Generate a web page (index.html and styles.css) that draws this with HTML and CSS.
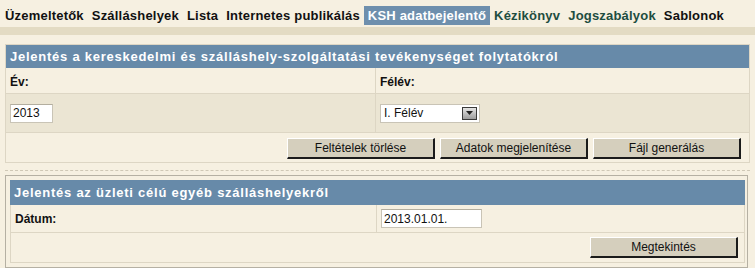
FILE: index.html
```html
<!DOCTYPE html>
<html lang="hu">
<head>
<meta charset="utf-8">
<title>KSH adatbejelentő</title>
<link rel="stylesheet" href="styles.css">
</head>
<body>
<nav class="topnav">
  <a class="nav-item" href="#">Üzemeltetők</a>
  <a class="nav-item" href="#">Szálláshelyek</a>
  <a class="nav-item" href="#">Lista</a>
  <a class="nav-item" href="#">Internetes publikálás</a>
  <a class="nav-item active" href="#">KSH adatbejelentő</a>
  <a class="nav-item visited" href="#">Kézikönyv</a>
  <a class="nav-item visited" href="#">Jogszabályok</a>
  <a class="nav-item" href="#">Sablonok</a>
</nav>
<div class="band"></div>
<main class="content">
  <section class="panel">
    <h2 class="panel-title">Jelentés a kereskedelmi és szálláshely-szolgáltatási tevékenységet folytatókról</h2>
    <div class="row row-label">
      <div class="cell cell-left">Év:</div>
      <div class="cell">Félév:</div>
    </div>
    <div class="row row-input">
      <div class="cell cell-left"><input class="field field-year" type="text" value="2013"></div>
      <div class="cell">
        <span class="select-wrap">
          <select class="select"><option>I. Félév</option><option>II. Félév</option></select>
          <span class="select-arrow"><svg width="7" height="4" viewBox="0 0 7 4"><path d="M0 0h7L3.5 4z" fill="#222"/></svg></span>
        </span>
      </div>
    </div>
    <div class="row row-actions">
      <button class="btn" type="button">Feltételek törlése</button>
      <button class="btn" type="button">Adatok megjelenítése</button>
      <button class="btn" type="button">Fájl generálás</button>
    </div>
  </section>
  <div class="divider"></div>
  <section class="panel-outer">
    <div class="panel-inner">
      <h2 class="panel-title panel-title-2">Jelentés az üzleti célú egyéb szálláshelyekről</h2>
      <div class="row row-label2">
        <div class="cell cell-left2">Dátum:</div>
        <div class="cell"><input class="field field-date" type="text" value="2013.01.01."></div>
      </div>
      <div class="row row-actions2">
        <button class="btn" type="button">Megtekintés</button>
      </div>
    </div>
  </section>
</main>
</body>
</html>
```
FILE: styles.css
```css
* { box-sizing: border-box; }
html, body { margin: 0; padding: 0; }
body {
  background: #f6f0e1;
  font-family: "Liberation Sans", Arial, sans-serif;
  color: #111;
  overflow: hidden;
}
.topnav {
  display: flex;
  align-items: center;
  height: 27px;
  padding-left: 1px;
  padding-top: 3px;
  background: #f6f0e1;
}
.nav-item {
  font-size: 13px;
  font-weight: bold;
  color: #111;
  text-decoration: none;
  padding: 3px 4px;
  line-height: 13px;
  letter-spacing: 0.2px;
}
.nav-item.active {
  background: #6e8fad;
  color: #fff;
}
.nav-item.visited { color: #1e4d40; }
.band {
  height: 8px;
  background: #e3dbc3;
}
.content {
  padding-top: 9px;
}
.panel {
  margin: 0 5px;
  border: 1px solid #ddd6c4;
}
.panel-title {
  margin: 0;
  height: 23px;
  line-height: 23px;
  background: #678aa9;
  color: #fff;
  font-size: 13px;
  font-weight: bold;
  padding-left: 4px;
  letter-spacing: 0.75px;
  white-space: nowrap;
}
.row {
  display: flex;
  border-bottom: 1px solid #ddd6c4;
}
.cell {
  padding-left: 4px;
  display: flex;
  align-items: center;
  font-size: 12px;
  font-weight: bold;
}
.cell-left {
  width: 370px;
  border-right: 1px solid #ddd6c4;
}
.row-label { height: 26px; }
.row-label .cell { padding-top: 2px; }
.row-input {
  height: 39px;
  background: #ebe5d3;
}
.field {
  height: 19px;
  border: 1px solid #c9c4b6;
  border-top-color: #b3ae9f;
  background: #fff;
  font-family: "Liberation Sans", Arial, sans-serif;
  font-size: 12px;
  padding: 0 2px;
  color: #111;
}
.field-year { width: 43px; }
.select-wrap {
  position: relative;
  display: inline-block;
  width: 100px;
  height: 19px;
}
.select {
  appearance: none;
  -webkit-appearance: none;
  width: 100px;
  height: 19px;
  border: 1px solid #c9c4b6;
  background: #fff;
  font-family: "Liberation Sans", Arial, sans-serif;
  font-size: 12px;
  padding: 0 3px;
  color: #111;
  border-radius: 0;
}
.select-arrow {
  position: absolute;
  right: 3px;
  top: 3px;
  width: 15px;
  height: 13px;
  background: linear-gradient(#e4e4e4, #9c9c9c);
  border: 1px solid #3a3a3a;
  display: flex;
  align-items: center;
  justify-content: center;
}
.row-actions {
  height: 29px;
  border-bottom: none;
  justify-content: flex-end;
  align-items: center;
  gap: 5px;
  padding-right: 8px;
  padding-top: 2px;
}
.btn {
  width: 148px;
  height: 21px;
  background: #d5cfbd;
  border-top: 1px solid #fff;
  border-left: 1px solid #fff;
  border-right: 2px solid #1b1b1b;
  border-bottom: 2px solid #1b1b1b;
  font-family: "Liberation Sans", Arial, sans-serif;
  font-size: 12px;
  color: #111;
  padding: 0;
}
.divider {
  margin: 7px 5px 4px 5px;
  border-top: 1px dashed #cfc8b6;
}
.panel-outer {
  margin: 0 7px 0 5px;
  border: 1px solid #b5b0a3;
  padding: 4px 2px 4px 4px;
}
.panel-inner {
  border-left: 1px solid #ddd6c4;
  border-right: 1px solid #ddd6c4;
}
.panel-title-2 {
  height: 25px;
  line-height: 25px;
  margin: 0 -1px;
}
.row-label2 { height: 28px; }
.cell-left2 {
  width: 366px;
  border-right: 1px solid #ddd6c4;
  padding-top: 1px;
}
.field-date { width: 101px; }
.row-actions2 {
  height: 30px;
  justify-content: flex-end;
  align-items: center;
  padding-right: 6px;
}
```
